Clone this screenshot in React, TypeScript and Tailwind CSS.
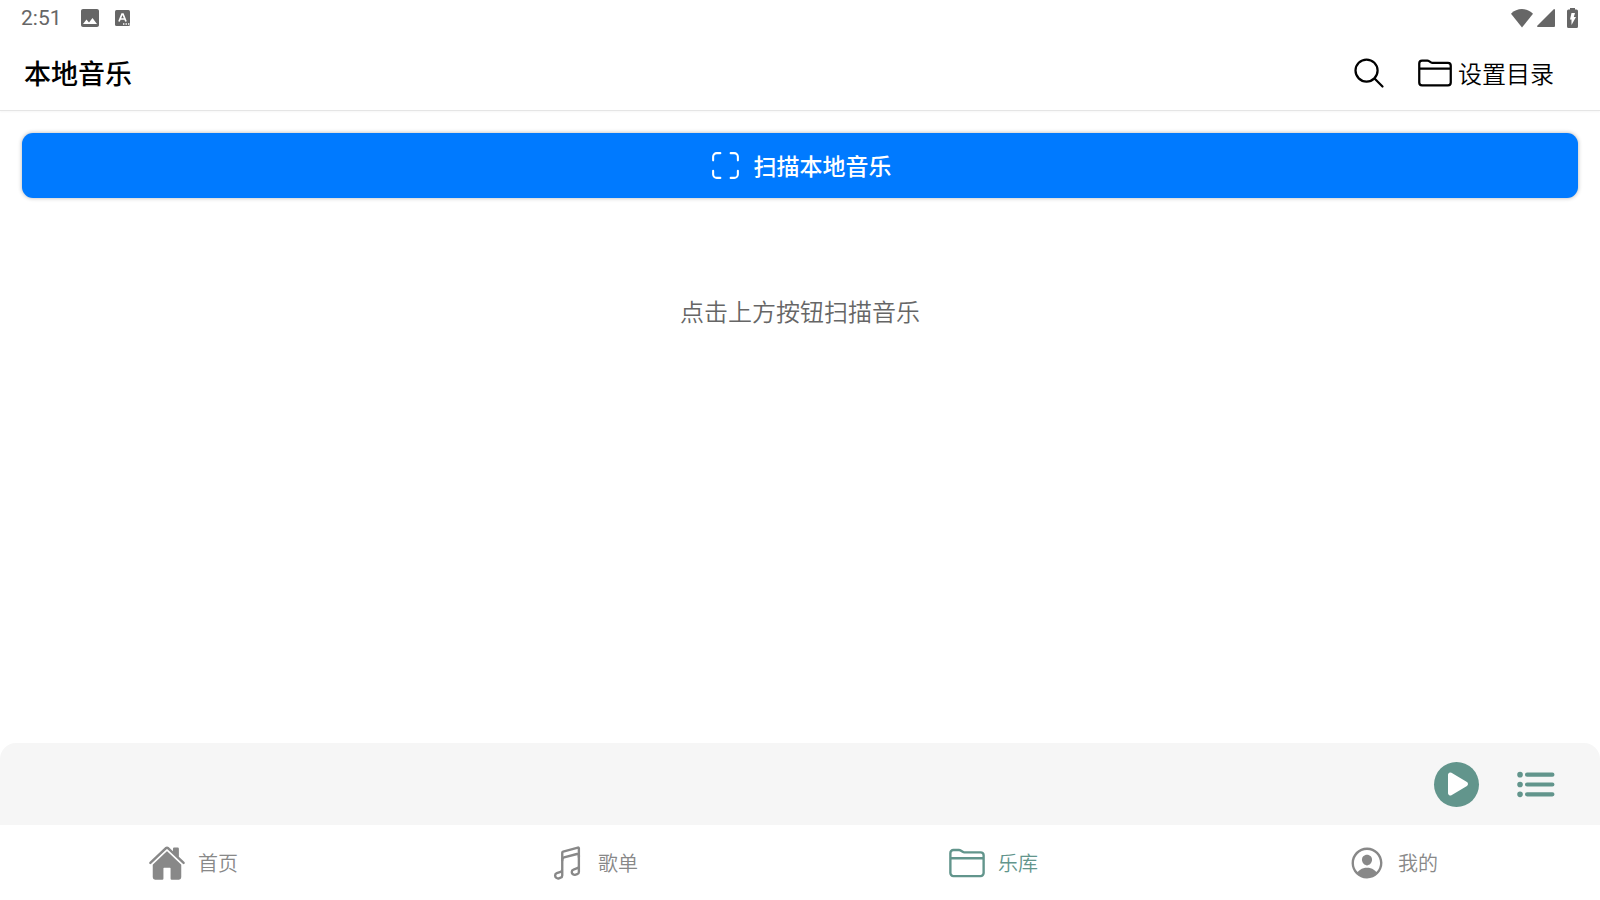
import type { ReactNode } from "react"
import {
  IoFolderOutline,
  IoHome,
  IoList,
  IoMusicalNotesOutline,
  IoPersonCircleOutline,
  IoPlay,
  IoScanOutline,
  IoSearchOutline,
} from "react-icons/io5"

function StatusBar() {
  return (
    <div className="flex h-9 items-center justify-between pl-[21px] pr-[22px] text-[#666]">
      <div className="flex items-center">
        <span className="w-[60px] font-['Roboto',sans-serif] text-[21px] leading-6">2:51</span>
        <svg className="mr-4 h-[18px] w-[18px]" viewBox="3 3 18 18" fill="currentColor">
          <path d="M21 19V5c0-1.100-.9-2-2-2H5c-1.100 0-2 .9-2 2v14c0 1.100.9 2 2 2h14c1.100 0 2-.9 2-2zM8.500 13.500l2.500 3 3.500-4.500 4.500 6H5l3.500-4.500z" />
        </svg>
        <svg className="h-4 w-[15px]" viewBox="0 0 15 16">
          <rect width="15" height="16" rx="1.500" fill="currentColor" />
          <path d="M4 11.500 7 4h1l3 7.500M5 9h5" fill="none" stroke="white" strokeWidth="1.700" />
          <path d="M8 14h1.400M10.500 14h1.400M13 14h1.400" stroke="white" strokeWidth="1.400" />
        </svg>
      </div>
      <div className="flex items-center">
        <svg className="mr-1 h-[19px] w-[22px]" viewBox="0 0 22 19" fill="currentColor">
          <path d="M11 18.500 0 4.700C3 1.500 7 0 11 0s8 1.500 11 4.700z" />
        </svg>
        <svg className="mr-3 h-[18px] w-[18px]" viewBox="0 0 18 18" fill="currentColor">
          <path d="M17 0q1 0 1 1v16q0 1-1 1H1q-1 0-1-1z" />
        </svg>
        <svg className="h-5 w-[11px]" viewBox="0 0 11 20">
          <path
            d="M3 0h5v1.500h1.500A1.500 1.500 0 0 1 11 3v15.500a1.500 1.500 0 0 1-1.500 1.500h-8A1.500 1.500 0 0 1 0 18.500V3a1.500 1.500 0 0 1 1.500-1.500H3z"
            fill="currentColor"
          />
          <path d="M4.500 5H8L6.800 9H9l-4.500 8v-5.500H3z" fill="white" />
        </svg>
      </div>
    </div>
  )
}

function Header() {
  return (
    <header className="flex h-[75px] items-center justify-between border-b border-[#e5e5e5] px-6 shadow-[0_1px_2px_rgba(0,0,0,0.04)]">
      <h1 className="text-[27px] leading-9 font-medium">本地音乐</h1>
      <div className="flex items-center gap-[30px] pr-[22px]">
        <button type="button" aria-label="搜索">
          <IoSearchOutline className="h-9 w-9" />
        </button>
        <button type="button" className="flex items-center gap-[5px] text-[24px] leading-9 font-[350]">
          <IoFolderOutline className="h-9 w-9" />
          设置目录
        </button>
      </div>
    </header>
  )
}

function PlayerBar() {
  return (
    <div className="flex h-[82px] items-center justify-end gap-[34px] rounded-t-[16px] bg-[#f6f6f6] pr-[42px] text-[#62958c]">
      <button
        type="button"
        aria-label="播放"
        className="flex h-[45px] w-[45px] items-center justify-center rounded-full bg-[#62958c] pl-[3px] text-white"
      >
        <IoPlay className="h-8 w-8" />
      </button>
      <button type="button" aria-label="播放列表">
        <IoList className="h-[45px] w-[45px]" />
      </button>
    </div>
  )
}

function TabLink({ icon, label, active }: { icon: ReactNode; label: string; active?: boolean }) {
  return (
    <a
      href="#"
      aria-current={active ? "page" : undefined}
      className={`flex items-center justify-center gap-3 pr-[14px] text-[20px] leading-7 font-[350] ${
        active ? "text-[#62958c]" : "text-[#888]"
      }`}
    >
      {icon}
      {label}
    </a>
  )
}

export default function App() {
  return (
    <div className="flex min-h-screen flex-col bg-white font-['Noto_Sans_CJK_SC',sans-serif] text-black">
      <StatusBar />
      <Header />

      <main className="flex-1 px-[22px] pt-[22px]">
        <button
          type="button"
          className="flex h-[65px] w-full items-center justify-center gap-3 rounded-[11px] bg-[#007aff] text-[23px] font-medium text-white shadow-[0_0_4px_rgba(0,0,0,0.3)]"
        >
          <IoScanOutline className="h-[33px] w-[33px]" />
          扫描本地音乐
        </button>
        <p className="mt-[95px] text-center text-[24px] leading-9 font-[350] text-[#666]">点击上方按钮扫描音乐</p>
      </main>

      <PlayerBar />
      <nav className="grid h-[75px] grid-cols-4">
        <TabLink icon={<IoHome className="h-[38px] w-[38px]" />} label="首页" />
        <TabLink icon={<IoMusicalNotesOutline className="h-[38px] w-[38px]" />} label="歌单" />
        <TabLink icon={<IoFolderOutline className="h-[38px] w-[38px]" />} label="乐库" active />
        <TabLink icon={<IoPersonCircleOutline className="h-[38px] w-[38px]" />} label="我的" />
      </nav>
    </div>
  )
}
